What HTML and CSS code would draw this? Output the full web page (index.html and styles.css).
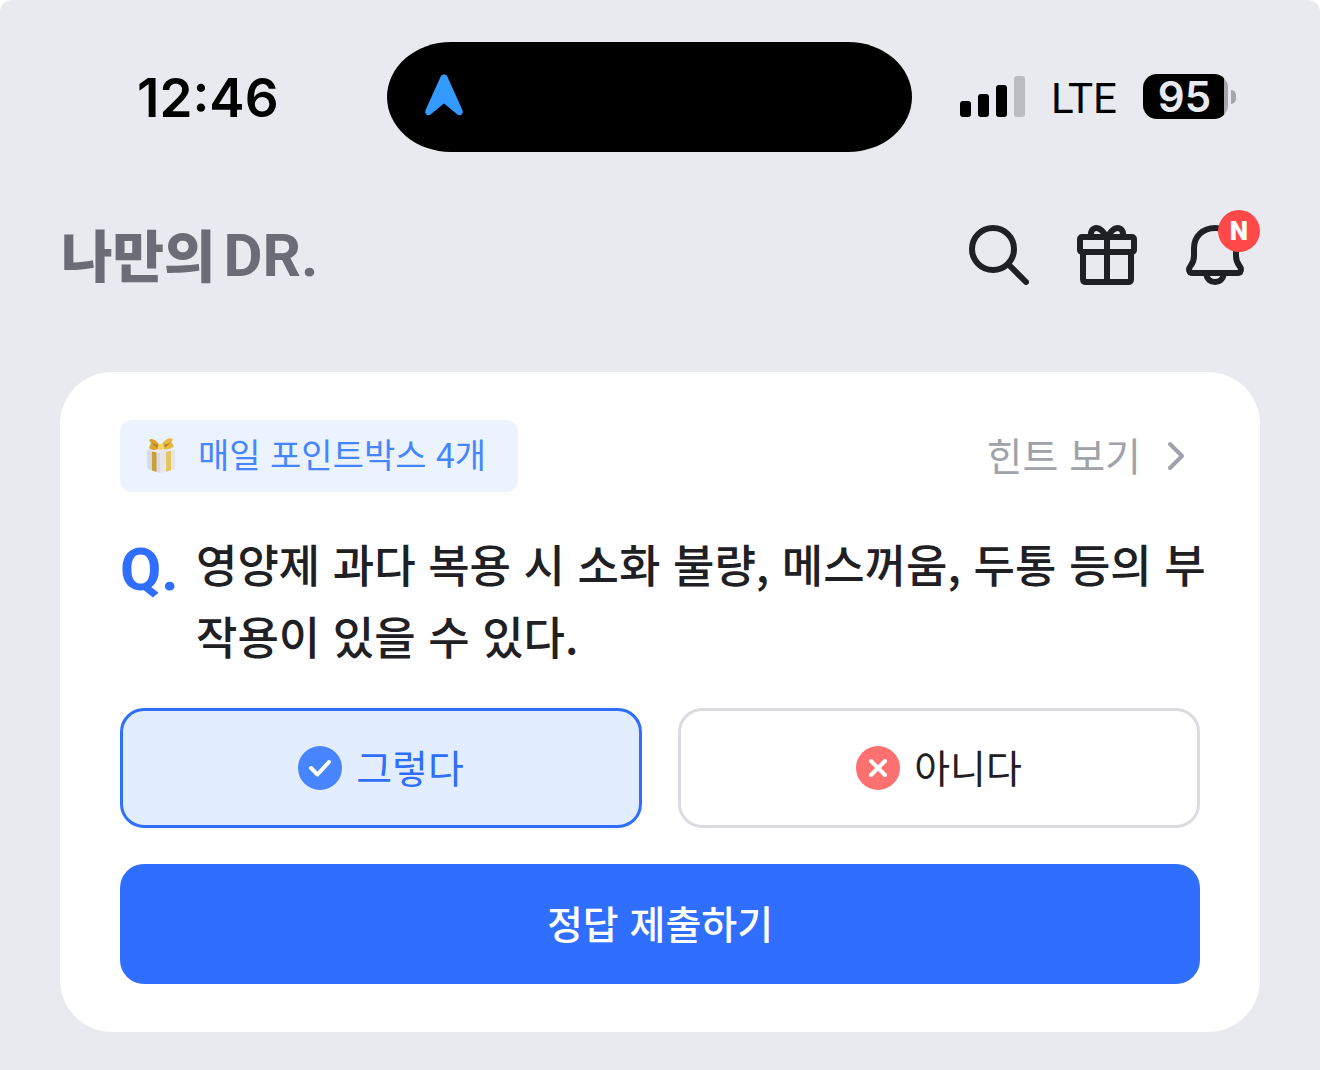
FILE: index.html
```html
<!DOCTYPE html>
<html lang="ko">
<head>
    <meta charset="UTF-8">
    <meta name="viewport" content="width=device-width, initial-scale=1.0">
    <title>나만의 DR.</title>
    <link rel="stylesheet" href="styles.css">
</head>
<body>
    <div class="screen">
        <div class="status-bar">
            <div class="status-time">12:46</div>
            <div class="island">
                <svg class="island-icon" viewBox="0 0 38 42">
                    <path d="M15.800 2.200C17 -.2 21 -.2 22.200 2.200L37.600 36.500C38.600 39.500 36 42.500 32.800 40.800L19 29.500L5.200 40.800C2 42.500 -.6 39.500 .4 36.500Z"/>
                </svg>
            </div>
            <div class="status-right">
                <svg class="signal" viewBox="0 0 65 41">
                    <rect x="0" y="25" width="11" height="16" rx="3"/>
                    <rect x="18" y="18" width="11" height="23" rx="3"/>
                    <rect x="36" y="9" width="11" height="32" rx="3"/>
                    <rect class="signal-off" x="54" y="0" width="11" height="41" rx="3"/>
                </svg>
                <span class="network">LTE</span>
                <div class="battery">
                    <span class="battery-level">95</span>
                    <span class="battery-cap"></span>
                </div>
            </div>
        </div>

        <header class="header">
            <h1 class="logo">나만의<span class="logo-dr">DR.</span></h1>
            <nav class="header-actions">
                <button class="icon-button" type="button" aria-label="검색">
                    <svg viewBox="0 0 60 60">
                        <circle cx="24" cy="24" r="21"/>
                        <path d="M39.500 39.500L57 57"/>
                    </svg>
                </button>
                <button class="icon-button" type="button" aria-label="선물">
                    <svg viewBox="0 0 60 60">
                        <rect x="3" y="12" width="54" height="15" rx="2"/>
                        <path d="M6 27V54Q6 57 9 57H51Q54 57 54 54V27M30 12V57"/>
                        <path d="M14 12C13 6 16 3 19.500 3C24 3 27 8 30 12C33 8 36 3 40.500 3C44 3 47 6 46 12"/>
                    </svg>
                </button>
                <button class="icon-button" type="button" aria-label="알림">
                    <svg viewBox="0 0 60 60">
                        <path d="M30 3C18 3 9 11.500 9 23V31C9 36 7.500 38.500 5.500 41C3 44 4 48 7.500 48H52.500C56 48 57 44 54.500 41C52.500 38.500 51 36 51 31V23C51 11.500 42 3 30 3Z"/>
                        <path d="M21 49C22 54 25.500 57 30 57C34.500 57 38 54 39 49"/>
                    </svg>
                    <span class="new-badge">N</span>
                </button>
            </nav>
        </header>

        <main class="quiz-card">
            <div class="quiz-top">
                <div class="point-tag">
                    <svg class="gift" viewBox="0 0 30 36">
                        <path fill="#d9d8e4" d="M1 12L14 15V35L3 31.500Q1.500 31 1.500 29Z"/>
                        <path fill="#e6e5ee" d="M14 15L29 12V29Q29 31 27.500 31.500L14 35Z"/>
                        <path fill="#c9a032" d="M6 13.200L10.500 14.200V34L6 32.500Z"/>
                        <path fill="#e3c65e" d="M20 13.700L25 12.700V32.300L20 33.700Z"/>
                        <path fill="#e9e8f0" d="M1 12L13 9L29 11.500L15 15.500Z"/>
                        <path fill="#d6a532" d="M14 8C10 1 5 0 3 2L5 5L3 10C6 13 11 12 14 10Z"/>
                        <path fill="#e6b946" d="M15 8C18 1 24 -1 27 1L25.500 4L28 8C25 12 19 12 15 10Z"/>
                        <path fill="#b98322" d="M12 7L5.500 5L11 10ZM18 7L25 4.500L19 9.500Z"/>
                        <circle fill="#f3d36c" cx="15" cy="9" r="3"/>
                    </svg>
                    <span>매일 포인트박스 4개</span>
                </div>
                <a class="hint-link" href="#">
                    <span>힌트 보기</span>
                    <svg viewBox="0 0 18 30"><path d="M3 3L15 15L3 27"/></svg>
                </a>
            </div>

            <form class="quiz-form">
                <div class="question">
                    <span class="question-mark">Q.</span>
                    <p class="question-text">영양제 과다 복용 시 소화 불량, 메스꺼움, 두통 등의 부작용이 있을 수 있다.</p>
                </div>
                <div class="answers">
                    <button class="answer selected" type="button" aria-pressed="true">
                        <svg viewBox="0 0 44 44">
                            <circle class="yes" cx="22" cy="22" r="22"/>
                            <path d="M13 22L19.500 28.500L31 16"/>
                        </svg>
                        <span>그렇다</span>
                    </button>
                    <button class="answer" type="button" aria-pressed="false">
                        <svg viewBox="0 0 44 44">
                            <circle class="no" cx="22" cy="22" r="22"/>
                            <path d="M15 15L29 29M29 15L15 29"/>
                        </svg>
                        <span>아니다</span>
                    </button>
                </div>
                <button class="submit-button" type="submit">정답 제출하기</button>
            </form>
        </main>
    </div>
</body>
</html>
```

FILE: styles.css
```css
* {
    margin: 0;
    padding: 0;
    box-sizing: border-box;
}

:root {
    --bg: #e9eaef;
    --card: #ffffff;
    --blue: #2f6eff;
    --blue-soft: #4785ff;
    --blue-light: #e2eeff;
    --text: #1f2024;
    --text-muted: #a0a2aa;
    --logo: #6a6c76;
    --border: #dbdce2;
    --red: #ff4848;
}

body {
    font-family: 'Noto Sans CJK KR', sans-serif;
    font-size: 39px;
    background: #ffffff;
    color: var(--text);
}

button {
    font: inherit;
    color: inherit;
    background: none;
    border: none;
    cursor: pointer;
}

.screen {
    min-height: 100vh;
    padding-bottom: 38px;
    background: var(--bg);
    border-radius: 12px 12px 0 0;
}

/* status bar */
.status-bar {
    display: grid;
    grid-template-columns: 1fr auto 1fr;
    align-items: center;
    padding: 42px 84px 0 62px;
    font-family: 'Inter', sans-serif;
    color: #000000;
}

.status-time {
    padding: 2px 0 0 75px;
    font-size: 53px;
    font-weight: 600;
    line-height: 64px;
}

.island {
    display: flex;
    align-items: center;
    width: 525px;
    height: 110px;
    padding: 0 0 4px 38px;
    background: #000000;
    border-radius: 64px / 55px;
}

.island-icon {
    width: 38px;
    height: 42px;
    fill: #339aff;
}

.status-right {
    display: flex;
    align-items: center;
    justify-content: flex-end;
    gap: 26px;
    padding-bottom: 1px;
}

.signal {
    width: 65px;
    height: 41px;
}

.signal-off {
    fill: #bbbcc0;
}

.network {
    padding-top: 4px;
    font-family: 'Roboto', sans-serif;
    font-size: 42px;
    line-height: 48px;
}

.battery {
    display: flex;
    align-items: center;
    gap: 3px;
}

.battery-level {
    width: 85px;
    padding-right: 2px;
    border-radius: 14px;
    background: linear-gradient(to right, #000000 81px, #a5a6aa 81px);
    color: var(--bg);
    font-size: 42px;
    font-weight: 600;
    line-height: 45px;
    text-align: center;
}

.battery-cap {
    width: 5px;
    height: 14px;
    border-radius: 0 5px 5px 0;
    background: #a5a6aa;
}

/* header */
.header {
    display: flex;
    align-items: center;
    justify-content: space-between;
    padding: 73px 75px 0 61px;
}

.logo {
    display: flex;
    align-items: center;
    gap: 8px;
    padding-bottom: 4px;
    color: var(--logo);
    font-size: 56px;
    font-weight: 900;
    line-height: 56px;
}

.logo-dr {
    padding-top: 6px;
    font-family: 'Roboto', sans-serif;
    font-size: 60px;
    font-weight: 700;
    line-height: 48px;
}

.header-actions {
    display: flex;
    gap: 48px;
}

.icon-button {
    position: relative;
    width: 60px;
    height: 60px;
}

.icon-button svg {
    display: block;
    fill: none;
    stroke: var(--text);
    stroke-width: 6;
    stroke-linecap: round;
    stroke-linejoin: round;
}

.new-badge {
    position: absolute;
    top: -15px;
    right: -15px;
    width: 42px;
    height: 42px;
    border-radius: 50%;
    background: var(--red);
    color: #ffffff;
    font-family: 'Roboto', sans-serif;
    font-size: 26px;
    font-weight: 900;
    line-height: 42px;
    text-align: center;
}

/* quiz card */
.quiz-card {
    margin: 87px 60px 0;
    padding: 48px 60px;
    background: var(--card);
    border-radius: 52px;
}

.quiz-top {
    display: flex;
    align-items: center;
    justify-content: space-between;
}

.point-tag {
    display: flex;
    align-items: center;
    gap: 22px;
    height: 72px;
    padding: 0 32px 0 26px;
    border-radius: 12px;
    background: #ebf3ff;
    color: var(--blue-soft);
    font-size: 34px;
}

.gift {
    width: 30px;
    height: 36px;
}

.hint-link {
    display: flex;
    align-items: center;
    gap: 26px;
    padding-right: 15px;
    color: var(--text-muted);
    text-decoration: none;
}

.point-tag span,
.hint-link span,
.answer span {
    padding-bottom: 4px;
    line-height: 60px;
}

.hint-link svg {
    width: 18px;
    height: 30px;
    fill: none;
    stroke: var(--text-muted);
    stroke-width: 4;
    stroke-linecap: round;
    stroke-linejoin: round;
}

.question {
    display: flex;
    margin: 36px -12px 36px 0;
}

.question-mark {
    flex: 0 0 76px;
    color: var(--blue);
    font-family: 'Roboto', sans-serif;
    font-size: 60px;
    font-weight: 700;
    line-height: 84px;
}

.question-text {
    font-size: 45px;
    font-weight: 500;
    line-height: 72px;
}

.answers {
    display: grid;
    grid-template-columns: 1fr 1fr;
    gap: 36px;
}

.answer {
    display: flex;
    align-items: center;
    justify-content: center;
    gap: 14px;
    height: 120px;
    border: 3px solid var(--border);
    border-radius: 24px;
}

.answer.selected {
    border-color: var(--blue);
    background: var(--blue-light);
    color: var(--blue);
}

.answer svg {
    width: 44px;
    height: 44px;
    fill: none;
    stroke: #ffffff;
    stroke-width: 4;
    stroke-linecap: round;
    stroke-linejoin: round;
}

.answer circle {
    stroke: none;
}

.yes {
    fill: var(--blue-soft);
}

.no {
    fill: #ff7070;
}

.submit-button {
    width: 100%;
    height: 120px;
    margin-top: 36px;
    padding-bottom: 4px;
    border-radius: 24px;
    background: var(--blue);
    color: #ffffff;
    font-weight: 500;
}
```
